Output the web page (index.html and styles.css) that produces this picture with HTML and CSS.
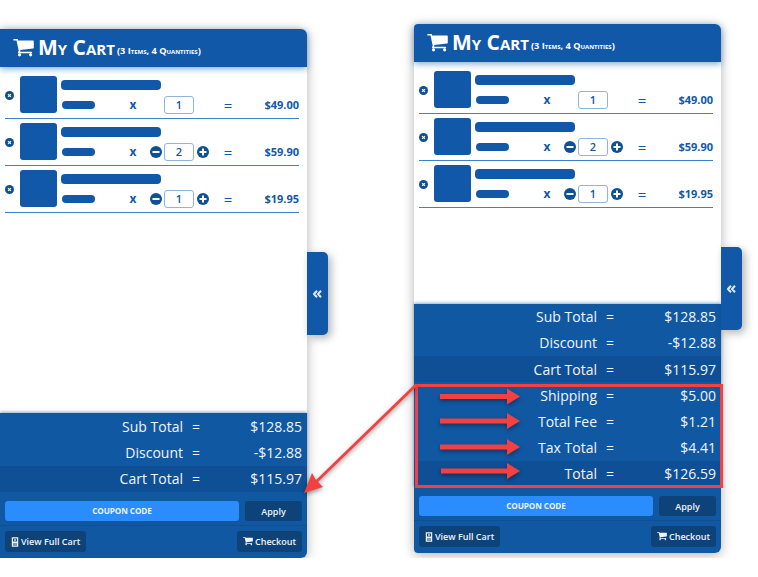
FILE: index.html
```html
<!DOCTYPE html>
<html lang="en">
<head>
    <meta charset="UTF-8">
    <meta name="viewport" content="width=device-width, initial-scale=1.0">
    <title>My Cart</title>
    <link rel="stylesheet" href="styles.css">
</head>
<body>
    <svg class="icon-defs" width="0" height="0">
        <symbol id="i-cart" viewBox="0 128 1664 1536">
            <path fill="currentColor" d="M640 1408q0 52-38 90t-90 38-90-38-38-90 38-90 90-38 90 38 38 90zm896 0q0 52-38 90t-90 38-90-38-38-90 38-90 90-38 90 38 38 90zm128-1088v512q0 24-16.500 42.500t-40.500 21.500l-1044 122q13 60 13 70 0 16-24 64h920q26 0 45 19t19 45-19 45-45 19h-1024q-26 0-45-19t-19-45q0-11 8-31.500t16-36 21.500-40 15.500-29.500l-177-823h-204q-26 0-45-19t-19-45 19-45 45-19h256q16 0 28.500 6.500t19.500 15.500 13 24.500 8 26 5.500 29.500 4.500 26h1201q26 0 45 19t19 45z"/>
        </symbol>
        <symbol id="i-remove" viewBox="0 0 10 10">
            <circle cx="5" cy="5" r="5" fill="#0f4f96"/>
            <path d="M3.4 3.4l3.2 3.2M6.600 3.4l-3.2 3.2" stroke="#fff" stroke-width="1.300"/>
        </symbol>
        <symbol id="i-minus" viewBox="0 0 12 12">
            <circle cx="6" cy="6" r="6" fill="#0f4f96"/>
            <rect x="2.500" y="5" width="7" height="2" fill="#fff"/>
        </symbol>
        <symbol id="i-plus" viewBox="0 0 12 12">
            <circle cx="6" cy="6" r="6" fill="#0f4f96"/>
            <path d="M2.500 6h7M6 2.500v7" stroke="#fff" stroke-width="2"/>
        </symbol>
        <symbol id="i-book" viewBox="0 0 10 12">
            <path fill="currentColor" d="M1 0h8v12H1zM2.500 1.500v4h5v-4zM2.500 8v1h5V8zM2.500 10v.8h5V10z" fill-rule="evenodd"/>
            <rect x="4" y="2.500" width="2" height="2" fill="currentColor"/>
        </symbol>
    </svg>

    <div class="page">
        <div class="cart cart-left">
            <div class="cart-head">
                <svg class="cart-icon"><use href="#i-cart"/></svg>
                <h1>My Cart</h1>
                <span class="cart-count">(3 Items, 4 Quantities)</span>
            </div>
            <div class="items">
                <div class="item">
                    <svg class="remove"><use href="#i-remove"/></svg>
                    <div class="thumb"></div>
                    <div class="item-body">
                        <div class="bar-name"></div>
                        <div class="item-line">
                            <div class="bar-short"></div>
                            <span class="times">x</span>
                            <div class="qty"><span class="qty-box">1</span></div>
                            <span class="equals">=</span>
                            <span class="price">$49.00</span>
                        </div>
                    </div>
                </div>
                <div class="item">
                    <svg class="remove"><use href="#i-remove"/></svg>
                    <div class="thumb"></div>
                    <div class="item-body">
                        <div class="bar-name"></div>
                        <div class="item-line">
                            <div class="bar-short"></div>
                            <span class="times">x</span>
                            <div class="qty"><svg class="step"><use href="#i-minus"/></svg><span class="qty-box">2</span><svg class="step"><use href="#i-plus"/></svg></div>
                            <span class="equals">=</span>
                            <span class="price">$59.90</span>
                        </div>
                    </div>
                </div>
                <div class="item">
                    <svg class="remove"><use href="#i-remove"/></svg>
                    <div class="thumb"></div>
                    <div class="item-body">
                        <div class="bar-name"></div>
                        <div class="item-line">
                            <div class="bar-short"></div>
                            <span class="times">x</span>
                            <div class="qty"><svg class="step"><use href="#i-minus"/></svg><span class="qty-box">1</span><svg class="step"><use href="#i-plus"/></svg></div>
                            <span class="equals">=</span>
                            <span class="price">$19.95</span>
                        </div>
                    </div>
                </div>
            </div>
            <div class="totals">
                <div class="total-row"><span>Sub Total</span><span class="total-eq">=</span><span class="total-val">$128.85</span></div>
                <div class="total-row"><span>Discount</span><span class="total-eq">=</span><span class="total-val">-$12.88</span></div>
                <div class="total-row total-dark"><span>Cart Total</span><span class="total-eq">=</span><span class="total-val">$115.97</span></div>
            </div>
            <div class="coupon-row">
                <div class="coupon">COUPON CODE</div>
                <div class="btn btn-apply">Apply</div>
            </div>
            <div class="actions">
                <div class="btn btn-wide"><svg class="btn-icon"><use href="#i-book"/></svg>View Full Cart</div>
                <div class="btn btn-wide"><svg class="btn-icon btn-icon-cart"><use href="#i-cart"/></svg>Checkout</div>
            </div>
            <div class="cart-tab">
                <svg class="tab-icon" viewBox="0 0 9 8"><path d="M4 .8L1 4l3 3.200M8 .8L5 4l3 3.200" fill="none" stroke="currentColor" stroke-width="2"/></svg>
            </div>
        </div>

        <div class="cart cart-right">
            <div class="cart-head">
                <svg class="cart-icon"><use href="#i-cart"/></svg>
                <h1>My Cart</h1>
                <span class="cart-count">(3 Items, 4 Quantities)</span>
            </div>
            <div class="items">
                <div class="item">
                    <svg class="remove"><use href="#i-remove"/></svg>
                    <div class="thumb"></div>
                    <div class="item-body">
                        <div class="bar-name"></div>
                        <div class="item-line">
                            <div class="bar-short"></div>
                            <span class="times">x</span>
                            <div class="qty"><span class="qty-box">1</span></div>
                            <span class="equals">=</span>
                            <span class="price">$49.00</span>
                        </div>
                    </div>
                </div>
                <div class="item">
                    <svg class="remove"><use href="#i-remove"/></svg>
                    <div class="thumb"></div>
                    <div class="item-body">
                        <div class="bar-name"></div>
                        <div class="item-line">
                            <div class="bar-short"></div>
                            <span class="times">x</span>
                            <div class="qty"><svg class="step"><use href="#i-minus"/></svg><span class="qty-box">2</span><svg class="step"><use href="#i-plus"/></svg></div>
                            <span class="equals">=</span>
                            <span class="price">$59.90</span>
                        </div>
                    </div>
                </div>
                <div class="item">
                    <svg class="remove"><use href="#i-remove"/></svg>
                    <div class="thumb"></div>
                    <div class="item-body">
                        <div class="bar-name"></div>
                        <div class="item-line">
                            <div class="bar-short"></div>
                            <span class="times">x</span>
                            <div class="qty"><svg class="step"><use href="#i-minus"/></svg><span class="qty-box">1</span><svg class="step"><use href="#i-plus"/></svg></div>
                            <span class="equals">=</span>
                            <span class="price">$19.95</span>
                        </div>
                    </div>
                </div>
            </div>
            <div class="totals">
                <div class="total-row"><span>Sub Total</span><span class="total-eq">=</span><span class="total-val">$128.85</span></div>
                <div class="total-row"><span>Discount</span><span class="total-eq">=</span><span class="total-val">-$12.88</span></div>
                <div class="total-row total-dark"><span>Cart Total</span><span class="total-eq">=</span><span class="total-val">$115.97</span></div>
                <div class="total-row"><span>Shipping</span><span class="total-eq">=</span><span class="total-val">$5.00</span></div>
                <div class="total-row"><span>Total Fee</span><span class="total-eq">=</span><span class="total-val">$1.21</span></div>
                <div class="total-row"><span>Tax Total</span><span class="total-eq">=</span><span class="total-val">$4.41</span></div>
                <div class="total-row total-dark"><span>Total</span><span class="total-eq">=</span><span class="total-val">$126.59</span></div>
            </div>
            <div class="coupon-row">
                <div class="coupon">COUPON CODE</div>
                <div class="btn btn-apply">Apply</div>
            </div>
            <div class="actions">
                <div class="btn btn-wide"><svg class="btn-icon"><use href="#i-book"/></svg>View Full Cart</div>
                <div class="btn btn-wide"><svg class="btn-icon btn-icon-cart"><use href="#i-cart"/></svg>Checkout</div>
            </div>
            <div class="cart-tab">
                <svg class="tab-icon" viewBox="0 0 9 8"><path d="M4 .8L1 4l3 3.200M8 .8L5 4l3 3.200" fill="none" stroke="currentColor" stroke-width="2"/></svg>
            </div>
        </div>
    </div>

    <!-- red annotations drawn over the screenshot -->
    <svg class="notes" width="758" height="577" viewBox="0 0 758 577">
        <rect class="note-box" x="416.500" y="385.500" width="305" height="101"/>
        <path class="note" d="M415 384l2 2-99 96 5 5-19 6 8-20 4 7z"/>
        <path class="note" d="M440 394h67v-5.500l13 8-13 8V399h-67z"/>
        <path class="note" d="M440 418.500h67V413l13 8-13 8v-5.500h-67z"/>
        <path class="note" d="M440 444.500h67V439l13 8-13 8v-5.500h-67z"/>
        <path class="note" d="M441 468.500h66V463l13 8-13 8v-5.500h-66z"/>
    </svg>
</body>
</html>
```

FILE: styles.css
```css
body {
    font-family: "Open Sans", Arial, sans-serif;
    background-color: #fff;
    margin: 0;
    padding: 0;
}
.icon-defs {
    position: absolute;
}
.page {
    display: flex;
    align-items: flex-start;
    gap: 107px;
    padding-top: 24px;
}
.cart {
    position: relative;
    display: flex;
    flex-direction: column;
    width: 307px;
    height: 529px;
    background-color: #fff;
    border-radius: 0 6px 6px 0;
    box-shadow: 0 2px 12px rgba(0,0,0,0.3);
}
.cart-left {
    margin-top: 5px;
}
.cart-right {
    border-radius: 4px 6px 6px 4px;
}
.cart-head {
    display: flex;
    align-items: center;
    height: 38px;
    padding-left: 13px;
    background-color: #1158a8;
    color: #fff;
    border-radius: 0 6px 0 0;
    box-shadow: 0 2px 6px rgba(17,88,168,0.5);
}
.cart-right .cart-head {
    border-radius: 4px 6px 0 0;
}
.cart-icon {
    width: 21px;
    height: 19px;
    margin-right: 4px;
}
.cart-head h1 {
    margin: -2px 2px 0 0;
    font-size: 21px;
    font-weight: 700;
    font-variant: small-caps;
    line-height: 38px;
}
.cart-count {
    margin-top: 4px;
    font-size: 9.200px;
    font-weight: 700;
    font-variant: small-caps;
    white-space: nowrap;
}
.items {
    flex: 1;
    padding-top: 5px;
}
.item {
    display: flex;
    align-items: flex-start;
    height: 42px;
    margin: 0 8px 0 5px;
    padding-top: 4px;
    border-bottom: 1px solid #3f82cc;
}
.remove {
    width: 9px;
    height: 9px;
    margin-top: 15px;
    margin-right: 6px;
    flex: none;
}
.thumb {
    width: 37px;
    height: 37px;
    background-color: #1158a8;
    border-radius: 3px;
    flex: none;
}
.item-body {
    flex: 1;
    padding: 4px 0 0 4px;
}
.bar-name {
    width: 100px;
    height: 10px;
    background-color: #1158a8;
    border-radius: 4px;
}
.item-line {
    display: grid;
    grid-template-columns: 66px 12px 80px 18px 1fr;
    grid-template-rows: 18px;
    align-items: center;
    margin-top: 6px;
    color: #1158a8;
    font-weight: 700;
    font-size: 11px;
}
.bar-short {
    width: 33px;
    height: 8px;
    margin-left: 1px;
    background-color: #1158a8;
    border-radius: 4px;
}
.times {
    padding-bottom: 2px;
    font-size: 12px;
    text-align: center;
}
.qty {
    display: flex;
    align-items: center;
    justify-content: center;
    gap: 2.500px;
}
.qty-box {
    width: 30px;
    height: 18px;
    border: 1px solid #8fb4de;
    border-radius: 3px;
    box-sizing: border-box;
    text-align: center;
    line-height: 15px;
    font-weight: 600;
    background-color: #fff;
}
.step {
    width: 12px;
    height: 12px;
    flex: none;
}
.equals {
    padding-bottom: 1px;
    text-align: center;
    font-size: 15px;
    font-weight: 400;
}
.price {
    padding-bottom: 1px;
    text-align: right;
}
.totals {
    background-color: #1158a3;
    color: #f1f5fb;
    font-size: 14px;
    box-shadow: 0 -1px 3px rgba(17,88,168,0.5);
}
.total-row {
    display: grid;
    grid-template-columns: 183px 26px 1fr;
    align-items: center;
    height: 26.200px;
    padding-right: 5px;
    text-align: right;
}
.total-eq {
    text-align: center;
}
.total-dark {
    background-color: #0f4f95;
}
.coupon-row {
    display: flex;
    gap: 6px;
    padding: 9px 5px 4px;
    background-color: #1158a3;
    border-bottom: 1px solid #0f4f95;
}
.coupon {
    flex: 1;
    height: 20px;
    background-color: #2a8cfd;
    border-radius: 3px;
    color: #e8f2ff;
    font-size: 8.200px;
    font-weight: 700;
    line-height: 20px;
    letter-spacing: -0.1px;
    text-align: center;
}
.btn {
    display: flex;
    align-items: center;
    justify-content: center;
    height: 21px;
    background-color: #0e4379;
    border-radius: 3px;
    color: #eef3fa;
    font-size: 9px;
    font-weight: 600;
}
.btn-apply {
    width: 57px;
    height: 20px;
}
.btn-wide {
    padding: 0 6px;
}
.actions {
    flex: none;
    display: flex;
    justify-content: space-between;
    padding: 5px 5px 6px;
    background-color: #1158a3;
    border-radius: 0 0 6px 0;
}
.cart-right .actions {
    border-radius: 0 0 6px 4px;
}
.btn-icon {
    width: 8px;
    height: 10px;
    margin-right: 2px;
}
.btn-icon-cart {
    width: 10px;
    height: 9px;
}
.cart-tab {
    position: absolute;
    top: 223px;
    left: 307px;
    display: flex;
    align-items: center;
    justify-content: center;
    width: 21px;
    height: 83px;
    background-color: #1158a8;
    color: #dfe9f6;
    border-radius: 0 5px 5px 0;
    box-shadow: 3px 3px 9px rgba(0,0,0,0.3);
}
.tab-icon {
    width: 9px;
    height: 8px;
}
.notes {
    position: absolute;
    top: 0;
    left: 0;
    pointer-events: none;
}
.note {
    fill: #f34040;
    filter: drop-shadow(0 2px 2px rgba(0,0,0,0.4));
}
.note-box {
    fill: none;
    stroke: #f34040;
    stroke-width: 3;
}
```
